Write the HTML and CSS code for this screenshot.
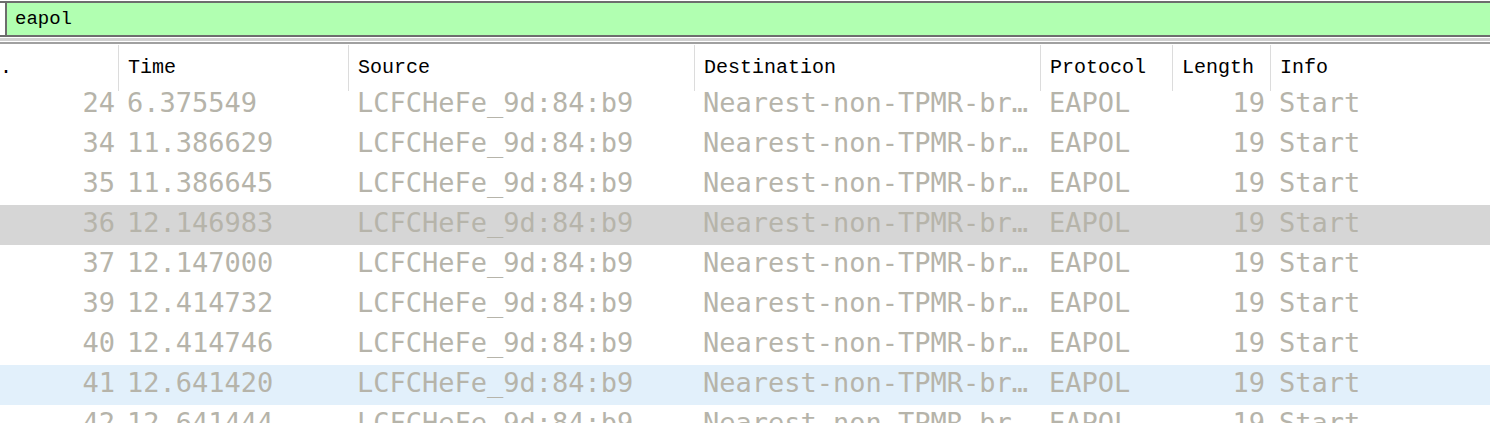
FILE: index.html
```html
<!DOCTYPE html>
<html>
<head>
<meta charset="utf-8">
<link rel="stylesheet" href="styles.css">
</head>
<body>
<div class="filter">
  <div class="filter-field">eapol</div>
</div>
<div class="divider"></div>
<div class="table">
  <div class="head">
    <div class="hc hc-no">.</div>
    <div class="hc">Time</div>
    <div class="hc">Source</div>
    <div class="hc">Destination</div>
    <div class="hc">Protocol</div>
    <div class="hc">Length</div>
    <div class="hc hc-last">Info</div>
  </div>
  <div class="row"><div class="c no">24</div><div class="c">6.375549</div><div class="c">LCFCHeFe_9d:84:b9</div><div class="c">Nearest-non-TPMR-br…</div><div class="c">EAPOL</div><div class="c len">19</div><div class="c">Start</div></div>
  <div class="row"><div class="c no">34</div><div class="c">11.386629</div><div class="c">LCFCHeFe_9d:84:b9</div><div class="c">Nearest-non-TPMR-br…</div><div class="c">EAPOL</div><div class="c len">19</div><div class="c">Start</div></div>
  <div class="row"><div class="c no">35</div><div class="c">11.386645</div><div class="c">LCFCHeFe_9d:84:b9</div><div class="c">Nearest-non-TPMR-br…</div><div class="c">EAPOL</div><div class="c len">19</div><div class="c">Start</div></div>
  <div class="row row-gray"><div class="c no">36</div><div class="c">12.146983</div><div class="c">LCFCHeFe_9d:84:b9</div><div class="c">Nearest-non-TPMR-br…</div><div class="c">EAPOL</div><div class="c len">19</div><div class="c">Start</div></div>
  <div class="row"><div class="c no">37</div><div class="c">12.147000</div><div class="c">LCFCHeFe_9d:84:b9</div><div class="c">Nearest-non-TPMR-br…</div><div class="c">EAPOL</div><div class="c len">19</div><div class="c">Start</div></div>
  <div class="row"><div class="c no">39</div><div class="c">12.414732</div><div class="c">LCFCHeFe_9d:84:b9</div><div class="c">Nearest-non-TPMR-br…</div><div class="c">EAPOL</div><div class="c len">19</div><div class="c">Start</div></div>
  <div class="row"><div class="c no">40</div><div class="c">12.414746</div><div class="c">LCFCHeFe_9d:84:b9</div><div class="c">Nearest-non-TPMR-br…</div><div class="c">EAPOL</div><div class="c len">19</div><div class="c">Start</div></div>
  <div class="row row-blue"><div class="c no">41</div><div class="c">12.641420</div><div class="c">LCFCHeFe_9d:84:b9</div><div class="c">Nearest-non-TPMR-br…</div><div class="c">EAPOL</div><div class="c len">19</div><div class="c">Start</div></div>
  <div class="row"><div class="c no">42</div><div class="c">12.641444</div><div class="c">LCFCHeFe_9d:84:b9</div><div class="c">Nearest-non-TPMR-br…</div><div class="c">EAPOL</div><div class="c len">19</div><div class="c">Start</div></div>
</div>
</body>
</html>
```

FILE: styles.css
```css
html, body {
  margin: 0;
  padding: 0;
  background: #ffffff;
  overflow: hidden;
}
body {
  width: 1490px;
  height: 423px;
  padding-top: 1px;
  box-sizing: border-box;
}
.filter {
  height: 32px;
  border-top: 2px solid #6d6d6d;
  border-bottom: 2px solid #6d6d6d;
  padding-left: 5px;
  display: flex;
}
.filter-field {
  flex: 1;
  border-left: 2px solid #6d6d6d;
  background: #b1ffb1;
  padding-left: 8px;
  font-family: "Liberation Mono", monospace;
  font-size: 19px;
  line-height: 32px;
  color: #000;
}
.divider {
  height: 3px;
  margin-top: 1px;
  background: #d0d0d0;
  border-bottom: 1px solid #ffffff;
  box-shadow: 0 2px 0 #a0a0a0;
  margin-bottom: 2px;
}
.table {
  display: flex;
  flex-direction: column;
}
.head, .row {
  display: grid;
  grid-template-columns: 119px 230px 346px 346px 132px 98px 1fr;
}
.head {
  height: 41px;
}
.hc {
  font-family: "Liberation Mono", monospace;
  font-size: 20px;
  line-height: 46px;
  color: #000;
  padding-left: 9px;
  border-right: 1px solid #dcdcdc;
  margin-top: 1px;
  white-space: nowrap;
}
.hc-no {
  padding-left: 0;
}
.hc-last {
  border-right: none;
}
.row {
  height: 40px;
  align-items: center;
}
.row-gray {
  background: #d6d6d6;
}
.row-blue {
  background: #e2f0fb;
}
.c {
  font-family: "DejaVu Sans Mono", monospace;
  font-size: 27px;
  line-height: 34px;
  padding-bottom: 4px;
  color: #b6b4aa;
  padding-left: 8px;
  white-space: nowrap;
  overflow: hidden;
}
.no {
  text-align: right;
  padding-left: 0;
  padding-right: 4px;
}
.len {
  text-align: right;
  padding-left: 0;
  padding-right: 6px;
}
```
